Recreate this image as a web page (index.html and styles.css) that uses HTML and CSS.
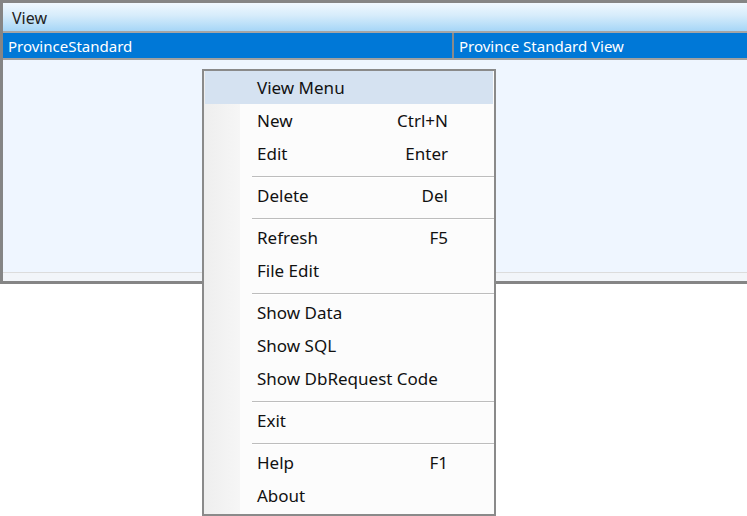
FILE: index.html
```html
<!DOCTYPE html>
<html>
<head>
<meta charset="utf-8">
<link rel="stylesheet" href="styles.css">
</head>
<body>
<div class="window">
  <div class="header"><span class="header-title">View</span></div>
  <div class="row selected">
    <div class="cell c1">ProvinceStandard</div>
    <div class="cell c2">Province Standard View</div>
  </div>
  <div class="grid-body"></div>
  <div class="footer"></div>
</div>

<div class="menu">
  <div class="menu-item hot"><span class="label">View Menu</span><span class="key"></span></div>
  <div class="menu-item"><span class="label">New</span><span class="key">Ctrl+N</span></div>
  <div class="menu-item"><span class="label">Edit</span><span class="key">Enter</span></div>
  <div class="sep"></div>
  <div class="menu-item"><span class="label">Delete</span><span class="key">Del</span></div>
  <div class="sep"></div>
  <div class="menu-item"><span class="label">Refresh</span><span class="key">F5</span></div>
  <div class="menu-item"><span class="label">File Edit</span><span class="key"></span></div>
  <div class="sep"></div>
  <div class="menu-item"><span class="label">Show Data</span><span class="key"></span></div>
  <div class="menu-item"><span class="label">Show SQL</span><span class="key"></span></div>
  <div class="menu-item"><span class="label">Show DbRequest Code</span><span class="key"></span></div>
  <div class="sep"></div>
  <div class="menu-item"><span class="label">Exit</span><span class="key"></span></div>
  <div class="sep"></div>
  <div class="menu-item"><span class="label">Help</span><span class="key">F1</span></div>
  <div class="menu-item"><span class="label">About</span><span class="key"></span></div>
</div>
</body>
</html>
```

FILE: styles.css
```css
html, body {
  margin: 0;
  padding: 0;
  background: #ffffff;
  font-family: "Noto Sans", "Open Sans", sans-serif;
  font-size: 15px;
  color: #1a1a1a;
}

body {
  width: 747px;
  height: 516px;
  overflow: hidden;
  position: relative;
}

.window {
  width: 760px;
  height: 278px;
  border-left: 3px solid #858585;
  border-top: 3px solid #858585;
  border-bottom: 3px solid #858585;
  display: flex;
  flex-direction: column;
  background: #eff6ff;
}

.header {
  height: 28px;
  flex: none;
  background: linear-gradient(to bottom, #f0f8ff 0%, #d6ecfb 45%, #a6d6f7 100%);
  border-bottom: 2px solid #a5a5a5;
  display: flex;
  align-items: center;
  padding-left: 9px;
  padding-top: 1px;
  box-sizing: border-box;
  height: 30px;
  color: #222;
  font-size: 16px;
}

.row {
  height: 25px;
  flex: none;
  display: flex;
  border-bottom: 2px solid #a0a0a0;
}

.row.selected {
  background: #0078d7;
  color: #ffffff;
}

.cell {
  display: flex;
  align-items: center;
}

.c1 {
  width: 444px;
  padding-left: 5px;
  border-right: 2px solid #8a8a8a;
}

.c2 {
  padding-left: 5px;
}

.grid-body {
  flex: 1;
}

.footer {
  height: 8px;
  flex: none;
  border-top: 1px solid #dcdcdc;
  background: #f2f5f9;
}

.menu {
  position: absolute;
  left: 202px;
  top: 69px;
  width: 290px;
  padding: 0 0 2px;
  border: 2px solid #8a8a8a;
  background: linear-gradient(to right, #eeeeee 0px, #f6f6f6 36px, #fcfcfc 36px);
  display: flex;
  flex-direction: column;
  font-size: 17px;
  color: #111111;
}

.menu-item {
  height: 33px;
  display: flex;
  align-items: center;
  padding-left: 52px;
  padding-right: 45px;
  margin: 0 1px;
}

.menu-item.hot {
  background: #d5e2f1;
}

.label {
  flex: 1;
}

.key {
  text-align: right;
}

.sep {
  height: 9px;
  box-sizing: border-box;
  display: flex;
  align-items: flex-end;
  padding-left: 48px;
  padding-bottom: 1px;
}

.sep::before {
  content: "";
  flex: 1;
  height: 1px;
  background: #bdbdbd;
  border-bottom: 1px solid #ffffff;
}
```
